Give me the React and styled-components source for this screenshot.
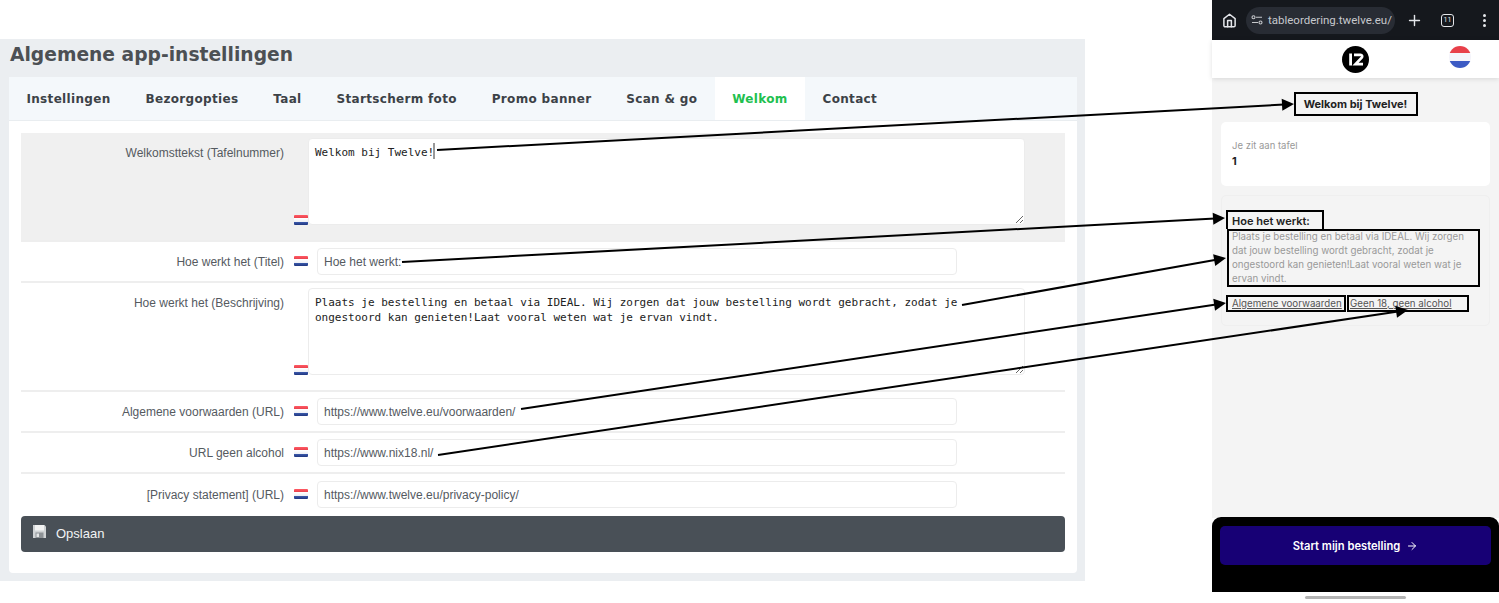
import React from 'react';
import styled, { createGlobalStyle } from 'styled-components';
import { FiArrowRight, FiHome, FiPlus } from 'react-icons/fi';

const tabs = ['Instellingen', 'Bezorgopties', 'Taal', 'Startscherm foto', 'Promo banner', 'Scan & go', 'Welkom', 'Contact'];

const description =
  'Plaats je bestelling en betaal via IDEAL. Wij zorgen dat jouw bestelling wordt gebracht, zodat je ongestoord kan genieten!Laat vooral weten wat je ervan vindt.';

// from x/y -> to x/y, the arrow tip lands on the "to" point
const arrows = [
  [437, 150, 1294, 104],
  [402, 262, 1225, 218],
  [962, 305, 1226, 258],
  [521, 409, 1226, 303],
  [438, 455, 1408, 310],
];

export default function App() {
  return (
    <Page>
      <GlobalStyle />
      <Admin>
        <Title>Algemene app-instellingen</Title>
        <Card>
          <Tabs>
            {tabs.map((tab) => (
              <Tab key={tab} $active={tab === 'Welkom'}>
                {tab}
              </Tab>
            ))}
          </Tabs>
          <Form>
            <AreaRow $shaded $height={109}>
              <Label>Welkomsttekst (Tafelnummer)</Label>
              <AreaWrap>
                <Flag $area />
                <Area readOnly value="Welkom bij Twelve!" />
              </AreaWrap>
            </AreaRow>
            <InputRow label="Hoe werkt het (Titel)" value="Hoe het werkt:" />
            <AreaRow $height={109}>
              <Label>Hoe werkt het (Beschrijving)</Label>
              <AreaWrap>
                <Flag $area />
                <Area readOnly value={description} />
              </AreaWrap>
            </AreaRow>
            <InputRow label="Algemene voorwaarden (URL)" value="https://www.twelve.eu/voorwaarden/" />
            <InputRow label="URL geen alcohol" value="https://www.nix18.nl/" />
            <InputRow label="[Privacy statement] (URL)" value="https://www.twelve.eu/privacy-policy/" last />
            <SaveButton>
              <FloppyIcon />
              <span>Opslaan</span>
            </SaveButton>
          </Form>
        </Card>
      </Admin>

      <Phone>
        <BrowserBar>
          <FiHome size={15} strokeWidth={2.4} />
          <UrlPill>
            <TuneIcon />
            <UrlText>tableordering.twelve.eu/</UrlText>
          </UrlPill>
          <FiPlus size={17} />
          <TabCount>11</TabCount>
          <Dots>
            <i />
            <i />
            <i />
          </Dots>
        </BrowserBar>
        <AppHeader>
          <Logo />
          <RoundFlag />
        </AppHeader>
        <AppMain>
          <Heading>Welkom bij Twelve!</Heading>
          <TableCard>
            <Muted>Je zit aan tafel</Muted>
            <TableNumber>1</TableNumber>
          </TableCard>
          <InfoCard>
            <InfoTitle>Hoe het werkt:</InfoTitle>
            <InfoText>
              <span>{description}</span>
            </InfoText>
            <LinkRow>
              <InfoLink $width={120} $pad={4}>
                Algemene voorwaarden
              </InfoLink>
              <InfoLink $width={122} $pad={1}>
                Geen 18, geen alcohol
              </InfoLink>
            </LinkRow>
          </InfoCard>
        </AppMain>
        <Sheet>
          <StartButton>
            Start mijn bestelling <FiArrowRight size={12} />
          </StartButton>
        </Sheet>
        <HomeZone>
          <HomeBar />
        </HomeZone>
      </Phone>

      <Overlay width="1499" height="603" viewBox="0 0 1499 603">
        <line x1="434" y1="143" x2="434" y2="159" stroke="#333" strokeWidth="1" />
        {arrows.map(([x1, y1, x2, y2]) => {
          const angle = (Math.atan2(y2 - y1, x2 - x1) * 180) / Math.PI;
          const len = Math.hypot(x2 - x1, y2 - y1);
          return (
            <g key={x1} transform={`translate(${x1} ${y1}) rotate(${angle})`}>
              <line x1="0" y1="0" x2={len - 10} y2="0" stroke="#000" strokeWidth="2" />
              <polygon points={`${len},0 ${len - 12},-6 ${len - 12},6`} fill="#000" />
            </g>
          );
        })}
      </Overlay>
    </Page>
  );
}

function InputRow({ label, value, last }) {
  return (
    <Row $last={last}>
      <Label>{label}</Label>
      <Flag />
      <TextInput readOnly value={value} />
    </Row>
  );
}

function FloppyIcon() {
  return (
    <svg width="13" height="13" viewBox="0 0 13 13">
      <path d="M0 0h11.5L13 1.5V13H0z" fill="#cfd2d4" />
      <rect x="2" y="0" width="9" height="5.5" fill="#f2f3f3" />
      <rect x="2.5" y="7.5" width="8" height="5.5" fill="#8d9296" />
      <rect x="3.5" y="8.5" width="2.5" height="3.5" fill="#e4e6e7" />
    </svg>
  );
}

function TuneIcon() {
  return (
    <svg width="12" height="10" viewBox="0 0 12 10" fill="none" stroke="#c6c8cc" strokeWidth="1.1">
      <circle cx="2.5" cy="2.2" r="1.5" />
      <line x1="5" y1="2.2" x2="11" y2="2.2" />
      <circle cx="9.5" cy="7.5" r="1.5" />
      <line x1="1" y1="7.5" x2="7" y2="7.5" />
    </svg>
  );
}

function Logo() {
  return (
    <svg width="27" height="27" viewBox="0 0 27 27">
      <circle cx="13.5" cy="13.5" r="13.5" fill="#000" />
      <rect x="7.2" y="7.5" width="2.8" height="12" fill="#fff" />
      <path d="M12 8.8h6.5c1.6 0 2.2 1.6 1.2 2.8L13.5 18.2h7.5" fill="none" stroke="#fff" strokeWidth="2.7" />
    </svg>
  );
}

const GlobalStyle = createGlobalStyle`
  html, body {
    margin: 0;
    background: #fff;
  }
  * {
    box-sizing: border-box;
  }
`;

const Page = styled.div`
  position: relative;
  display: flex;
  align-items: flex-start;
  width: 1499px;
  height: 603px;
  overflow: hidden;
  background: #fff;
  font-family: 'Liberation Sans', Arial, sans-serif;
`;

const Overlay = styled.svg`
  position: absolute;
  top: 0;
  left: 0;
  pointer-events: none;
`;

const Admin = styled.section`
  width: 1085px;
  height: 542px;
  margin-top: 39px;
  padding: 0 8px 8px 9px;
  background: #ebeef1;
`;

const Title = styled.h1`
  height: 38px;
  margin: 0;
  padding-left: 1px;
  font: bold 18.7px/31px 'DejaVu Sans', Verdana, sans-serif;
  color: #4c5054;
`;

const Card = styled.div`
  height: 496px;
  background: #fff;
  border-radius: 0 0 4px 4px;
`;

const Tabs = styled.nav`
  display: flex;
  height: 44px;
  background: #f4f8fb;
  border-bottom: 1px solid #e9edf0;
`;

const Tab = styled.a`
  padding: 0 17.45px;
  font: bold 12px/44px 'DejaVu Sans', Verdana, sans-serif;
  letter-spacing: 0.33px;
  color: ${(p) => (p.$active ? '#22c04f' : '#3c4247')};
  background: ${(p) => (p.$active ? '#fff' : 'transparent')};
`;

const Form = styled.div`
  padding: 12px 12px 0;
`;

const Row = styled.div`
  display: flex;
  align-items: center;
  height: 41px;
  border-bottom: ${(p) => (p.$last ? 'none' : '2px solid #eeeeee')};
`;

const AreaRow = styled.div`
  display: flex;
  align-items: flex-start;
  height: ${(p) => p.$height}px;
  padding-top: 5px;
  background: ${(p) => (p.$shaded ? '#f0f0f0' : 'transparent')};
  border-bottom: 2px solid #eeeeee;
`;

const Label = styled.label`
  flex: none;
  width: 263px;
  text-align: right;
  font-size: 12px;
  line-height: 28px;
  color: #555a5f;
  ${AreaRow} & {
    line-height: 18px;
    padding-top: 6px;
  }
`;

const AreaWrap = styled.div`
  display: flex;
  align-items: flex-end;
  margin-left: 10px;
`;

const Flag = styled.span`
  flex: none;
  display: block;
  width: 14px;
  height: 10px;
  margin-left: ${(p) => (p.$area ? '0' : '10px')};
  margin-bottom: ${(p) => (p.$area ? '0' : '1px')};
  background: linear-gradient(#ff5a64 0, #e8404c 32%, #ffffff 33%, #eef0f6 66%, #3f5fb0 67%, #1f3580 100%);
  border-radius: 1px;
`;

const Area = styled.textarea`
  display: block;
  width: 717px;
  height: 87px;
  padding: 6px 6px;
  border: 1px solid #ececec;
  border-radius: 4px;
  outline: none;
  background: #fff;
  font: 11px/15px 'DejaVu Sans Mono', monospace;
  color: #222;
`;

const TextInput = styled.input`
  width: 640px;
  height: 27px;
  margin-left: 9px;
  padding: 0 6px;
  border: 1px solid #ececec;
  border-radius: 4px;
  outline: none;
  font: 12px 'Liberation Sans', Arial, sans-serif;
  color: #555a5f;
`;

const SaveButton = styled.button`
  display: flex;
  align-items: center;
  gap: 10px;
  width: 100%;
  height: 36px;
  margin-top: 1px;
  padding: 0 12px 1px;
  border: none;
  border-radius: 4px;
  background: #495057;
  color: #f1f3f5;
  font: 13px 'Liberation Sans', Arial, sans-serif;
  svg {
    margin-top: -4px;
  }
`;

const Phone = styled.aside`
  display: flex;
  flex-direction: column;
  flex: none;
  width: 287px;
  height: 603px;
  margin-left: 127px;
  font-family: Inter, 'Noto Sans', sans-serif;
`;

const BrowserBar = styled.div`
  display: flex;
  align-items: center;
  height: 40px;
  padding: 0 13px 0 10px;
  background: #15181d;
  color: #e4e6ea;
  > svg {
    flex: none;
  }
`;

const UrlPill = styled.div`
  display: flex;
  align-items: center;
  gap: 5px;
  width: 149px;
  height: 27px;
  margin: 0 11px 0 9px;
  padding: 0 5px;
  border-radius: 14px;
  background: #282c34;
  overflow: hidden;
  svg {
    flex: none;
  }
`;

const UrlText = styled.span`
  font: 11.5px Roboto, sans-serif;
  color: #c6c8cc;
  white-space: nowrap;
`;

const TabCount = styled.span`
  flex: none;
  width: 13px;
  height: 13px;
  margin-left: 18px;
  border: 1.5px solid #e4e6ea;
  border-radius: 3px;
  font: 7px/10px Roboto, sans-serif;
  text-align: center;
`;

const Dots = styled.span`
  display: flex;
  flex-direction: column;
  gap: 2px;
  margin-left: auto;
  i {
    width: 3px;
    height: 3px;
    border-radius: 50%;
    background: #e4e6ea;
  }
`;

const AppHeader = styled.header`
  position: relative;
  z-index: 1;
  display: flex;
  align-items: center;
  justify-content: center;
  flex: none;
  height: 38px;
  background: #fff;
  box-shadow: 0 1px 5px rgba(0, 0, 0, 0.12);
`;

const RoundFlag = styled.span`
  position: absolute;
  top: 6px;
  left: 237px;
  width: 22px;
  height: 22px;
  border-radius: 50%;
  background: linear-gradient(#e8404a 0 33%, #f4f4fa 33% 67%, #3c5bc4 67% 100%);
`;

const AppMain = styled.main`
  flex: 1;
  padding: 14px 9px 0;
  background: #f4f4f4;
  color: #222;
`;

const Heading = styled.h2`
  width: 124px;
  height: 24px;
  margin: 0 auto 6px;
  border: 2px solid #000;
  font-size: 11px;
  font-weight: 700;
  line-height: 20px;
  text-align: center;
  white-space: nowrap;
`;

const TableCard = styled.div`
  height: 64px;
  padding: 17px 11px 0;
  background: #fff;
  border-radius: 5px;
`;

const Muted = styled.div`
  font-size: 9.5px;
  line-height: 13px;
  color: #999;
`;

const TableNumber = styled.div`
  margin-top: 2px;
  font-size: 11px;
  font-weight: 700;
  line-height: 14px;
`;

const InfoCard = styled.div`
  height: 131px;
  margin-top: 9px;
  padding: 14px 5px 0;
  border: 1px solid #efefef;
  border-radius: 5px;
`;

const InfoTitle = styled.h3`
  width: 98px;
  height: 19px;
  margin: 0 0 0 -1px;
  padding: 2px 0 0 4px;
  border: 2px solid #000;
  border-bottom: none;
  font-size: 11px;
  font-weight: 600;
  line-height: 15px;
`;

const InfoText = styled.p`
  width: 253px;
  height: 58px;
  margin: 0;
  padding: 0 3px;
  border: 2px solid #000;
  font-size: 9.75px;
  line-height: 14px;
  color: #999;
  span {
    display: block;
    margin-top: -1px;
  }
`;

const LinkRow = styled.div`
  display: flex;
  margin: 8px 0 0 -1px;
`;

const InfoLink = styled.a`
  width: ${(p) => p.$width}px;
  height: 17px;
  margin-right: 1px;
  padding-left: ${(p) => p.$pad}px;
  border: 2px solid #000;
  font-size: 9.75px;
  line-height: 13px;
  color: #555;
  text-decoration: underline;
  white-space: nowrap;
`;

const Sheet = styled.div`
  flex: none;
  height: 75px;
  margin-top: -1px;
  padding: 9px 8px 0;
  background: #000;
  border-radius: 9px 9px 0 0;
`;

const StartButton = styled.button`
  display: flex;
  align-items: center;
  justify-content: center;
  gap: 6px;
  width: 271px;
  height: 39px;
  border: none;
  border-radius: 5px;
  background: #170075;
  color: #fff;
  font: 600 11.2px Inter, sans-serif;
`;

const HomeZone = styled.div`
  flex: none;
  height: 11px;
  padding-top: 4px;
  background: #fff;
`;

const HomeBar = styled.div`
  width: 101px;
  height: 3px;
  margin-left: 93px;
  border-radius: 2px;
  background: #b4b4b4;
`;
